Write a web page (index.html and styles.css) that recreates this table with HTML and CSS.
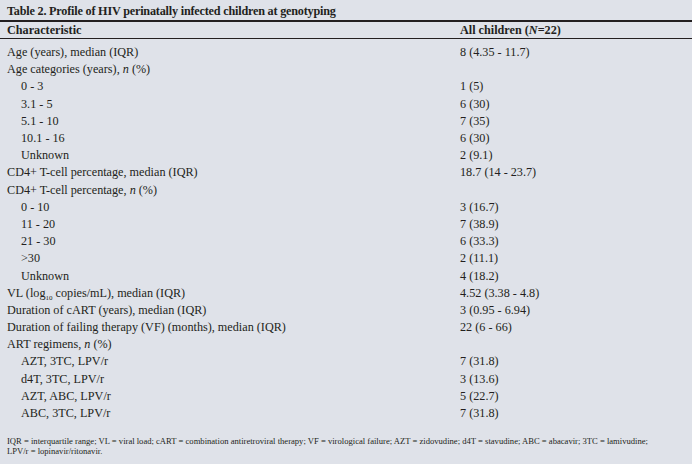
FILE: index.html
```html
<!DOCTYPE html>
<html>
<head>
<meta charset="utf-8">
<link rel="stylesheet" href="styles.css">
</head>
<body>
<div class="page">
  <div class="title">Table 2. Profile of HIV perinatally infected children at genotyping</div>
  <table class="tbl">
    <thead>
      <tr><th class="c1">Characteristic</th><th class="c2">All children (<i>N</i>=22)</th></tr>
    </thead>
    <tbody>
      <tr class="first"><td>Age (years), median (IQR)</td><td>8 (4.35 - 11.7)</td></tr>
      <tr><td>Age categories (years), <i>n</i> (%)</td><td></td></tr>
      <tr><td class="ind">0 - 3</td><td>1 (5)</td></tr>
      <tr><td class="ind">3.1 - 5</td><td>6 (30)</td></tr>
      <tr><td class="ind">5.1 - 10</td><td>7 (35)</td></tr>
      <tr><td class="ind">10.1 - 16</td><td>6 (30)</td></tr>
      <tr><td class="ind">Unknown</td><td>2 (9.1)</td></tr>
      <tr><td>CD4+ T-cell percentage, median (IQR)</td><td>18.7 (14 - 23.7)</td></tr>
      <tr><td>CD4+ T-cell percentage, <i>n</i> (%)</td><td></td></tr>
      <tr><td class="ind">0 - 10</td><td>3 (16.7)</td></tr>
      <tr><td class="ind">11 - 20</td><td>7 (38.9)</td></tr>
      <tr><td class="ind">21 - 30</td><td>6 (33.3)</td></tr>
      <tr><td class="ind">&gt;30</td><td>2 (11.1)</td></tr>
      <tr><td class="ind">Unknown</td><td>4 (18.2)</td></tr>
      <tr><td>VL (log<sub>10</sub> copies/mL), median (IQR)</td><td>4.52 (3.38 - 4.8)</td></tr>
      <tr><td>Duration of cART (years), median (IQR)</td><td>3 (0.95 - 6.94)</td></tr>
      <tr><td>Duration of failing therapy (VF) (months), median (IQR)</td><td>22 (6 - 66)</td></tr>
      <tr><td>ART regimens, <i>n</i> (%)</td><td></td></tr>
      <tr><td class="ind">AZT, 3TC, LPV/r</td><td>7 (31.8)</td></tr>
      <tr><td class="ind">d4T, 3TC, LPV/r</td><td>3 (13.6)</td></tr>
      <tr><td class="ind">AZT, ABC, LPV/r</td><td>5 (22.7)</td></tr>
      <tr><td class="ind">ABC, 3TC, LPV/r</td><td>7 (31.8)</td></tr>
    </tbody>
  </table>
  <div class="note">IQR = interquartile range; VL = viral load; cART = combination antiretroviral therapy; VF = virological failure; AZT = zidovudine; d4T = stavudine; ABC = abacavir; 3TC = lamivudine;<br>LPV/r = lopinavir/ritonavir.</div>
</div>
</body>
</html>
```

FILE: styles.css
```css
html, body {
  margin: 0;
  padding: 0;
  background: #dfe2e9;
}
body {
  width: 692px;
  height: 464px;
  overflow: hidden;
  font-family: "Liberation Serif", "DejaVu Serif", serif;
  color: #231f20;
}
.page {
  padding-top: 4px;
}
.title {
  font-weight: bold;
  font-size: 12.2px;
  line-height: 15px;
  padding-left: 7px;
  letter-spacing: -0.2px;
  border-bottom: 2px solid #231f20;
  padding-bottom: 1px;
}
.tbl {
  width: 100%;
  border-collapse: collapse;
  font-size: 12.2px;
}
.tbl th {
  text-align: left;
  font-weight: bold;
  height: 16px;
  padding: 0;
  border-bottom: 1px solid #231f20;
  vertical-align: middle;
}
.tbl td {
  padding: 0;
  height: 17.2px;
  vertical-align: middle;
  white-space: nowrap;
}
.tbl tr.first td {
  padding-top: 5px;
}
.tbl td:first-child, .tbl th.c1 {
  padding-left: 7px;
  width: 453px;
}
.tbl td.ind {
  padding-left: 21px;
  width: 439px;
}
.tbl sub {
  font-size: 7px;
  line-height: 0;
}
.note {
  font-size: 8.6px;
  line-height: 10px;
  padding: 14px 0 0 7px;
  white-space: nowrap;
}
```
